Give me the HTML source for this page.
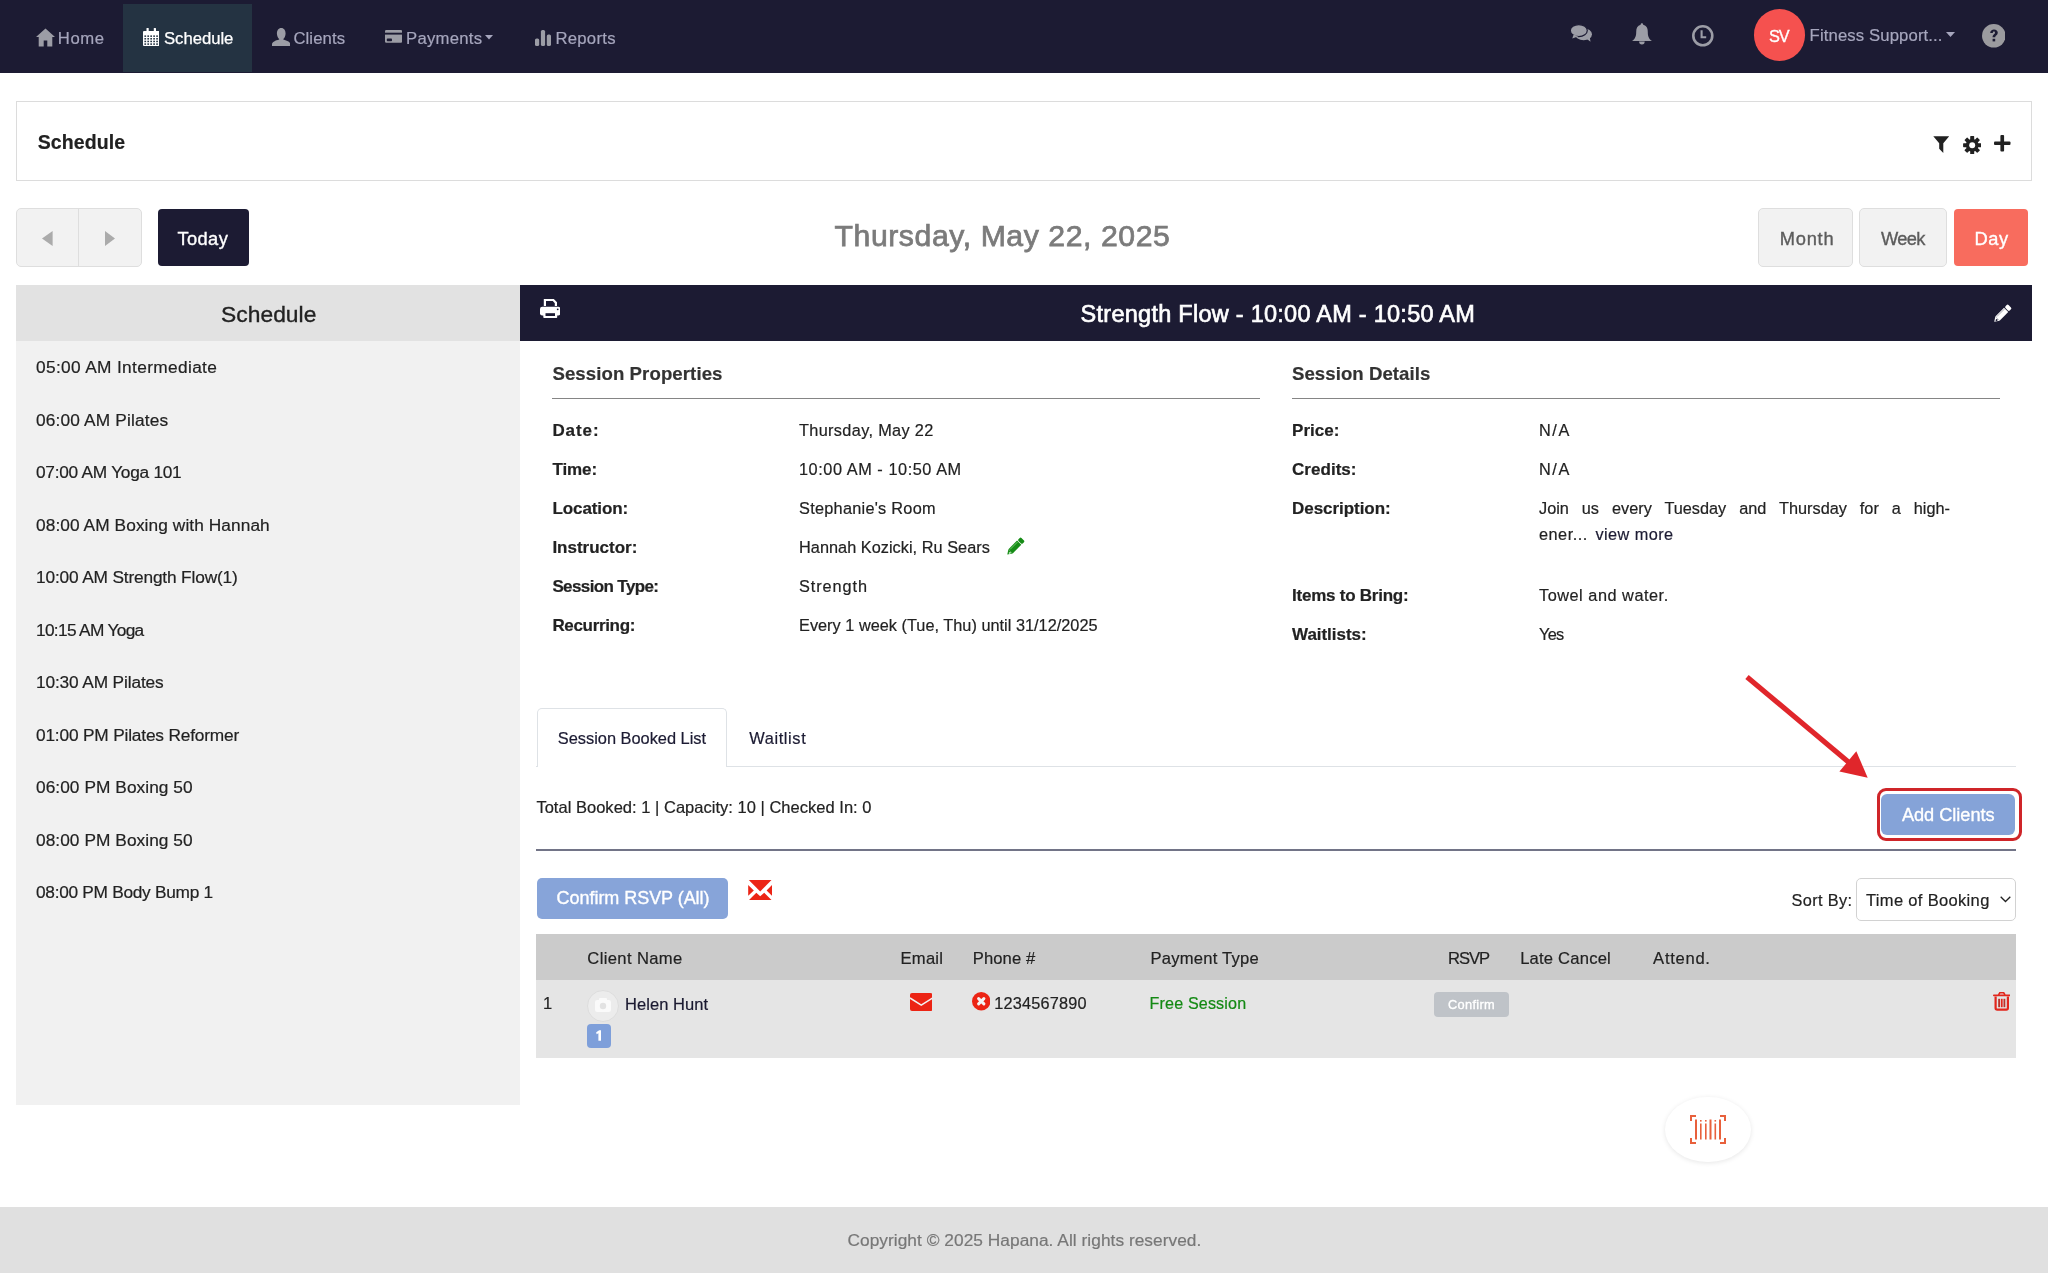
<!DOCTYPE html>
<html><head><meta charset="utf-8"><title>Schedule</title>
<style>
html,body{margin:0;padding:0;background:#fff;width:2048px;height:1273px;overflow:hidden;position:relative;font-family:"Liberation Sans", sans-serif}
.t{position:absolute;line-height:1;white-space:nowrap;font-family:"Liberation Sans", sans-serif;-webkit-text-stroke:0.2px currentColor}
svg{display:block}
</style></head><body><div id="root" style="position:absolute;left:0;top:0;width:2048px;height:1273px;will-change:transform">
<div style="position:absolute;left:0px;top:0px;width:2048px;height:73px;background:#1c1b33"></div>
<div style="position:absolute;left:123px;top:4px;width:129px;height:68px;background:#243342"></div>
<svg style="position:absolute;left:36px;top:27.5px;" width="19" height="19" viewBox="0 0 19 19"><path d="M9.5 0.5 L19 9 L16.3 9 L16.3 18.5 L11.3 18.5 L11.3 12.5 L7.7 12.5 L7.7 18.5 L2.7 18.5 L2.7 9 L0 9 Z" fill="#9c9da6"/></svg>
<div class="t" style="left:57.8px;top:30.61px;font-size:16.7px;font-weight:400;color:#a6a6bd;letter-spacing:0.567px;">Home</div>
<svg style="position:absolute;left:142.5px;top:28px;" width="16.5" height="18" viewBox="0 0 16.5 18"><rect x="0" y="3" width="16.5" height="15" rx="1" fill="#fff"/><rect x="3.5" y="0" width="2.2" height="4.5" rx="0.5" fill="#fff"/><rect x="10.8" y="0" width="2.2" height="4.5" rx="0.5" fill="#fff"/><rect x="1.40" y="7.40" width="1.7" height="1.5" fill="#243342"/><rect x="4.35" y="7.40" width="1.7" height="1.5" fill="#243342"/><rect x="7.30" y="7.40" width="1.7" height="1.5" fill="#243342"/><rect x="10.25" y="7.40" width="1.7" height="1.5" fill="#243342"/><rect x="13.20" y="7.40" width="1.7" height="1.5" fill="#243342"/><rect x="1.40" y="10.05" width="1.7" height="1.5" fill="#243342"/><rect x="4.35" y="10.05" width="1.7" height="1.5" fill="#243342"/><rect x="7.30" y="10.05" width="1.7" height="1.5" fill="#243342"/><rect x="10.25" y="10.05" width="1.7" height="1.5" fill="#243342"/><rect x="13.20" y="10.05" width="1.7" height="1.5" fill="#243342"/><rect x="1.40" y="12.70" width="1.7" height="1.5" fill="#243342"/><rect x="4.35" y="12.70" width="1.7" height="1.5" fill="#243342"/><rect x="7.30" y="12.70" width="1.7" height="1.5" fill="#243342"/><rect x="10.25" y="12.70" width="1.7" height="1.5" fill="#243342"/><rect x="13.20" y="12.70" width="1.7" height="1.5" fill="#243342"/><rect x="1.40" y="15.35" width="1.7" height="1.5" fill="#243342"/><rect x="4.35" y="15.35" width="1.7" height="1.5" fill="#243342"/><rect x="7.30" y="15.35" width="1.7" height="1.5" fill="#243342"/><rect x="10.25" y="15.35" width="1.7" height="1.5" fill="#243342"/><rect x="13.20" y="15.35" width="1.7" height="1.5" fill="#243342"/></svg>
<div class="t" style="left:164px;top:31.11px;font-size:16.7px;font-weight:400;color:#ffffff;letter-spacing:-0.029px;-webkit-text-stroke:0.25px currentColor;">Schedule</div>
<svg style="position:absolute;left:271.5px;top:28px;" width="18.5" height="18" viewBox="0 0 18.5 18"><path d="M9.25 0 C12 0 13.6 2.4 13.6 5.6 C13.6 8.2 12.3 10.3 11.3 11 L11.3 11.6 C15 12.6 18.5 14 18.5 16.5 L18.5 18 L0 18 L0 16.5 C0 14 3.5 12.6 7.2 11.6 L7.2 11 C6.2 10.3 4.9 8.2 4.9 5.6 C4.9 2.4 6.5 0 9.25 0 Z" fill="#9c9da6"/></svg>
<div class="t" style="left:293.4px;top:30.71px;font-size:16.7px;font-weight:400;color:#a6a6bd;letter-spacing:0.100px;">Clients</div>
<svg style="position:absolute;left:384.7px;top:30.3px;" width="17.2" height="12.8" viewBox="0 0 17.2 12.8"><rect x="0" y="0" width="17.2" height="12.8" rx="1.2" fill="#9c9da6"/><rect x="0" y="2.7" width="17.2" height="1.9" fill="#1c1b33"/><rect x="1.8" y="8.6" width="5.2" height="2.6" rx="0.8" fill="#1c1b33"/></svg>
<div class="t" style="left:406px;top:30.71px;font-size:16.7px;font-weight:400;color:#a6a6bd;letter-spacing:0.257px;">Payments</div>
<svg style="position:absolute;left:485px;top:34.8px;" width="8" height="5" viewBox="0 0 8 5"><path d="M0 0 L8 0 L4 4.6 Z" fill="#a6a6bd"/></svg>
<svg style="position:absolute;left:535px;top:29.7px;" width="16" height="16" viewBox="0 0 16 16"><rect x="0" y="8.5" width="4.2" height="7.5" rx="1.6" fill="#9c9da6"/><rect x="5.9" y="0" width="4.2" height="16" rx="1.6" fill="#9c9da6"/><rect x="11.8" y="4.5" width="4.2" height="11.5" rx="1.6" fill="#9c9da6"/></svg>
<div class="t" style="left:555.4px;top:30.71px;font-size:16.7px;font-weight:400;color:#a6a6bd;letter-spacing:0.283px;">Reports</div>
<svg style="position:absolute;left:1569.5px;top:24.3px;" width="23" height="18.5" viewBox="0 0 23 18.5"><ellipse cx="13.6" cy="10.3" rx="8.4" ry="6" fill="#9c9da6"/><path d="M15.5 14 L20.5 17.8 L19.8 13 Z" fill="#9c9da6"/><ellipse cx="8.8" cy="6.6" rx="8.5" ry="6" fill="#9c9da6" stroke="#1c1b33" stroke-width="1.2"/><path d="M3.6 10.5 L2.3 14.6 L8.5 12.2 Z" fill="#9c9da6"/></svg>
<svg style="position:absolute;left:1632px;top:23.3px;" width="20" height="22" viewBox="0 0 20 22"><path d="M9.9 0.2 C10.8 0.2 11.2 0.9 11.2 1.8 C14.6 2.6 15.8 5.2 15.8 9 C15.8 13 16.6 15.6 20 18.1 L0 18.1 C3.4 15.6 4.2 13 4.2 9 C4.2 5.2 5.4 2.6 8.6 1.8 C8.6 0.9 9 0.2 9.9 0.2 Z" fill="#9c9da6"/><path d="M7.1 18.5 L12.7 18.5 A2.8 3 0 0 1 7.1 18.5 Z" fill="#9c9da6"/></svg>
<svg style="position:absolute;left:1692px;top:25px;" width="21.6" height="21.6" viewBox="0 0 21.6 21.6"><circle cx="10.8" cy="10.8" r="9.5" fill="none" stroke="#9c9da6" stroke-width="2.6"/><path d="M9.6 5.2 L9.6 12.2 L14.2 12.2" fill="none" stroke="#9c9da6" stroke-width="2.1"/></svg>
<div style="position:absolute;left:1753.7px;top:9px;width:51.59999999999991px;height:51.6px;background:#f5514f;border-radius:50%"></div>
<div class="t" style="left:1769px;top:28.33px;font-size:16.3px;font-weight:400;color:#ffffff;letter-spacing:-1.000px;-webkit-text-stroke:0.35px currentColor;">SV</div>
<div class="t" style="left:1809.6px;top:28.01px;font-size:16.7px;font-weight:400;color:#a6a6bd;letter-spacing:0.124px;">Fitness Support...</div>
<svg style="position:absolute;left:1945.8px;top:32px;" width="9" height="5.5" viewBox="0 0 9 5.5"><path d="M0 0 L9 0 L4.5 5 Z" fill="#a6a6bd"/></svg>
<svg style="position:absolute;left:1981.5px;top:24px;" width="23.6" height="23.6" viewBox="0 0 23.6 23.6"><circle cx="11.8" cy="11.8" r="11.8" fill="#9b9b9f"/><path d="M8.2 9 C8.2 6.6 10 5.4 12 5.4 C14.3 5.4 15.8 6.8 15.8 8.7 C15.8 10.9 13.2 11.4 13.2 13.2 L10.6 13.2 C10.6 10.4 13 10.2 13 8.8 C13 8.1 12.6 7.6 11.9 7.6 C11.1 7.6 10.8 8.3 10.8 9 Z" fill="#1c1b33"/><rect x="10.6" y="14.8" width="2.6" height="2.6" fill="#1c1b33"/></svg>
<div style="position:absolute;left:16px;top:100.5px;width:2016px;height:80.5px;box-sizing:border-box;border:1.5px solid #dcdcdc;background:#fff"></div>
<div class="t" style="left:37.7px;top:132.51px;font-size:19.5px;font-weight:700;color:#212121;letter-spacing:0.086px;">Schedule</div>
<svg style="position:absolute;left:1932.5px;top:135.8px;" width="16.5" height="17" viewBox="0 0 16.5 17"><path d="M0.3 0.3 L16.2 0.3 L10.3 7.2 L10.3 17 L6.2 12.8 L6.2 7.2 Z" fill="#212121"/></svg>
<svg style="position:absolute;left:1962.6px;top:136px;" width="18.4" height="18.4" viewBox="0 0 18.4 18.4"><g transform="translate(9.2,9.2)"><rect x="-2" y="-9.1" width="4" height="4.2" rx="0.6" transform="rotate(0)" fill="#212121"/><rect x="-2" y="-9.1" width="4" height="4.2" rx="0.6" transform="rotate(45)" fill="#212121"/><rect x="-2" y="-9.1" width="4" height="4.2" rx="0.6" transform="rotate(90)" fill="#212121"/><rect x="-2" y="-9.1" width="4" height="4.2" rx="0.6" transform="rotate(135)" fill="#212121"/><rect x="-2" y="-9.1" width="4" height="4.2" rx="0.6" transform="rotate(180)" fill="#212121"/><rect x="-2" y="-9.1" width="4" height="4.2" rx="0.6" transform="rotate(225)" fill="#212121"/><rect x="-2" y="-9.1" width="4" height="4.2" rx="0.6" transform="rotate(270)" fill="#212121"/><rect x="-2" y="-9.1" width="4" height="4.2" rx="0.6" transform="rotate(315)" fill="#212121"/><circle r="6.3" fill="#212121"/><circle r="3" fill="#fff"/></g></svg>
<svg style="position:absolute;left:1994px;top:135px;" width="16.5" height="16.5" viewBox="0 0 16.5 16.5"><rect x="6.4" y="0" width="3.7" height="16.5" rx="1" fill="#212121"/><rect x="0" y="6.4" width="16.5" height="3.7" rx="1" fill="#212121"/></svg>
<div style="position:absolute;left:16px;top:208px;width:126px;height:59px;box-sizing:border-box;border:1px solid #dedede;background:#f2f2f2;border-radius:5px"></div>
<div style="position:absolute;left:78px;top:208.5px;width:1px;height:58.0px;background:#dedede"></div>
<svg style="position:absolute;left:42.4px;top:230.5px;" width="10.6" height="15" viewBox="0 0 10.6 15"><path d="M10.6 0 L10.6 15 L0 7.5 Z" fill="#ababab"/></svg>
<svg style="position:absolute;left:105.2px;top:230.5px;" width="10" height="15" viewBox="0 0 10 15"><path d="M0 0 L0 15 L10 7.5 Z" fill="#ababab"/></svg>
<div style="position:absolute;left:157.5px;top:209px;width:91.0px;height:57px;background:#1c1b33;border-radius:4px"></div>
<div class="t" style="left:177.5px;top:229.99px;font-size:18.3px;font-weight:400;color:#ffffff;letter-spacing:0.375px;-webkit-text-stroke:0.35px currentColor;">Today</div>
<div class="t" style="left:834.5px;top:220.64px;font-size:30.2px;font-weight:400;color:#7b7b7b;letter-spacing:0.576px;-webkit-text-stroke:0.75px currentColor;">Thursday, May 22, 2025</div>
<div style="position:absolute;left:1758px;top:208px;width:95px;height:59px;box-sizing:border-box;border:1px solid #dedede;background:#f2f2f2;border-radius:5px"></div>
<div class="t" style="left:1779.7px;top:229.99px;font-size:18.3px;font-weight:400;color:#5c5c5c;letter-spacing:0.775px;-webkit-text-stroke:0.35px currentColor;">Month</div>
<div style="position:absolute;left:1859px;top:208px;width:88px;height:59px;box-sizing:border-box;border:1px solid #dedede;background:#f2f2f2;border-radius:5px"></div>
<div class="t" style="left:1881px;top:229.99px;font-size:18.3px;font-weight:400;color:#5c5c5c;letter-spacing:-0.667px;-webkit-text-stroke:0.35px currentColor;">Week</div>
<div style="position:absolute;left:1954px;top:209px;width:74px;height:57px;background:#f86c5e;border-radius:4px"></div>
<div class="t" style="left:1974.4px;top:229.99px;font-size:18.3px;font-weight:400;color:#ffffff;letter-spacing:0.650px;-webkit-text-stroke:0.35px currentColor;">Day</div>
<div style="position:absolute;left:16px;top:285px;width:504px;height:820px;background:#f1f1f1"></div>
<div style="position:absolute;left:16px;top:285px;width:504px;height:56px;background:#e2e2e2"></div>
<div class="t" style="left:221px;top:302.50px;font-size:22.8px;font-weight:400;color:#222;letter-spacing:0.043px;-webkit-text-stroke:0.35px currentColor;">Schedule</div>
<div class="t" style="left:36px;top:359.21px;font-size:17.3px;font-weight:400;color:#222;letter-spacing:0.350px;">05:00 AM Intermediate</div>
<div class="t" style="left:36px;top:411.70px;font-size:17.3px;font-weight:400;color:#222;letter-spacing:0.167px;">06:00 AM Pilates</div>
<div class="t" style="left:36px;top:464.19px;font-size:17.3px;font-weight:400;color:#222;letter-spacing:-0.262px;">07:00 AM Yoga 101</div>
<div class="t" style="left:36px;top:516.68px;font-size:17.3px;font-weight:400;color:#222;letter-spacing:0.085px;">08:00 AM Boxing with Hannah</div>
<div class="t" style="left:36px;top:569.17px;font-size:17.3px;font-weight:400;color:#222;letter-spacing:-0.158px;">10:00 AM Strength Flow(1)</div>
<div class="t" style="left:36px;top:621.66px;font-size:17.3px;font-weight:400;color:#222;letter-spacing:-0.675px;">10:15 AM Yoga</div>
<div class="t" style="left:36px;top:674.15px;font-size:17.3px;font-weight:400;color:#222;letter-spacing:-0.133px;">10:30 AM Pilates</div>
<div class="t" style="left:36px;top:726.64px;font-size:17.3px;font-weight:400;color:#222;letter-spacing:-0.179px;">01:00 PM Pilates Reformer</div>
<div class="t" style="left:36px;top:779.13px;font-size:17.3px;font-weight:400;color:#222;letter-spacing:0.059px;">06:00 PM Boxing 50</div>
<div class="t" style="left:36px;top:831.62px;font-size:17.3px;font-weight:400;color:#222;letter-spacing:0.059px;">08:00 PM Boxing 50</div>
<div class="t" style="left:36px;top:884.11px;font-size:17.3px;font-weight:400;color:#222;letter-spacing:-0.284px;">08:00 PM Body Bump 1</div>
<div style="position:absolute;left:520px;top:285px;width:1512px;height:56px;background:#1c1b33"></div>
<svg style="position:absolute;left:539.5px;top:299px;" width="20.5" height="19" viewBox="0 0 20.5 19"><path d="M3.8 0 L13.8 0 L17 3.3 L17 7 L14.8 7 L14.8 4.2 L12.8 2.1 L6 2.1 L6 7 L3.8 7 Z" fill="#fff"/><rect x="0" y="7.8" width="20.5" height="8.6" rx="2.2" fill="#fff"/><rect x="3.3" y="12" width="13.9" height="7" rx="0.8" fill="#fff"/><rect x="5.5" y="14.2" width="9.5" height="2.8" fill="#1c1b33"/><circle cx="17.7" cy="10.3" r="0.9" fill="#1c1b33"/></svg>
<div class="t" style="left:1080.6px;top:302.93px;font-size:23.5px;font-weight:400;color:#ffffff;letter-spacing:0.262px;-webkit-text-stroke:0.65px currentColor;">Strength Flow - 10:00 AM - 10:50 AM</div>
<svg style="position:absolute;left:1993px;top:304.3px;" width="19.5" height="19.2" viewBox="0 0 19.5 19.2"><g transform="translate(1.2,17.8) rotate(-45)"><path d="M0 0 L4.6 -3 L4.6 3 Z" fill="#fff"/><rect x="4.6" y="-3" width="12.3" height="6" fill="#fff"/><rect x="17.7" y="-3" width="4.3" height="6" rx="1.3" fill="#fff"/><path d="M5.6 -1.8 L16.2 -1.8" stroke="#1c1b33" stroke-width="0.5" opacity="0.7"/><rect x="1.9" y="-0.3" width="2" height="1.6" fill="#1c1b33"/></g></svg>
<div class="t" style="left:552.4px;top:364.65px;font-size:18.6px;font-weight:700;color:#333;letter-spacing:0.094px;">Session Properties</div>
<div style="position:absolute;left:552px;top:398px;width:708px;height:1px;background:#858585"></div>
<div class="t" style="left:1292px;top:364.65px;font-size:18.6px;font-weight:700;color:#333;letter-spacing:0.057px;">Session Details</div>
<div style="position:absolute;left:1292px;top:398px;width:708px;height:1px;background:#858585"></div>
<div class="t" style="left:552.4px;top:421.96px;font-size:17px;font-weight:700;color:#222;letter-spacing:0.925px;">Date:</div>
<div class="t" style="left:799px;top:422.03px;font-size:16.3px;font-weight:400;color:#222;letter-spacing:0.347px;">Thursday, May 22</div>
<div class="t" style="left:552.4px;top:460.96px;font-size:17px;font-weight:700;color:#222;letter-spacing:-0.075px;">Time:</div>
<div class="t" style="left:799px;top:461.03px;font-size:16.3px;font-weight:400;color:#222;letter-spacing:0.561px;">10:00 AM - 10:50 AM</div>
<div class="t" style="left:552.4px;top:499.96px;font-size:17px;font-weight:700;color:#222;letter-spacing:-0.075px;">Location:</div>
<div class="t" style="left:799px;top:500.03px;font-size:16.3px;font-weight:400;color:#222;letter-spacing:0.267px;">Stephanie's Room</div>
<div class="t" style="left:552.4px;top:538.96px;font-size:17px;font-weight:700;color:#222;letter-spacing:-0.010px;">Instructor:</div>
<div class="t" style="left:799px;top:539.03px;font-size:16.3px;font-weight:400;color:#222;letter-spacing:0.035px;">Hannah Kozicki, Ru Sears</div>
<div class="t" style="left:552.4px;top:577.96px;font-size:17px;font-weight:700;color:#222;letter-spacing:-0.617px;">Session Type:</div>
<div class="t" style="left:799px;top:578.03px;font-size:16.3px;font-weight:400;color:#222;letter-spacing:0.914px;">Strength</div>
<div class="t" style="left:552.4px;top:616.96px;font-size:17px;font-weight:700;color:#222;letter-spacing:-0.333px;">Recurring:</div>
<div class="t" style="left:799px;top:617.03px;font-size:16.3px;font-weight:400;color:#222;letter-spacing:0.021px;">Every 1 week (Tue, Thu) until 31/12/2025</div>
<svg style="position:absolute;left:1005.5px;top:536.5px;" width="19.5" height="19" viewBox="0 0 19.5 19"><g transform="translate(1.3,17.6) rotate(-45)"><path d="M0 0 L4.6 -3 L4.6 3 Z" fill="#168c16"/><rect x="4.6" y="-3" width="12.2" height="6" fill="#168c16"/><rect x="17.6" y="-3" width="4.2" height="6" rx="1.2" fill="#168c16"/><path d="M5.6 -1.7 L16 -1.7" stroke="#86dd86" stroke-width="0.7"/><rect x="2" y="-0.2" width="2" height="1.6" fill="#c8f0c8"/></g></svg>
<div class="t" style="left:1292px;top:422.06px;font-size:17px;font-weight:700;color:#222;letter-spacing:0.040px;">Price:</div>
<div class="t" style="left:1539px;top:422.13px;font-size:16.3px;font-weight:400;color:#222;letter-spacing:1.550px;">N/A</div>
<div class="t" style="left:1292px;top:461.06px;font-size:17px;font-weight:700;color:#222;letter-spacing:0.043px;">Credits:</div>
<div class="t" style="left:1539px;top:461.13px;font-size:16.3px;font-weight:400;color:#222;letter-spacing:1.550px;">N/A</div>
<div class="t" style="left:1292px;top:500.46px;font-size:17px;font-weight:700;color:#222;letter-spacing:-0.045px;">Description:</div>
<div class="t" style="left:1292px;top:586.86px;font-size:17px;font-weight:700;color:#222;letter-spacing:-0.236px;">Items to Bring:</div>
<div class="t" style="left:1539px;top:586.93px;font-size:16.3px;font-weight:400;color:#222;letter-spacing:0.527px;">Towel and water.</div>
<div class="t" style="left:1292px;top:625.86px;font-size:17px;font-weight:700;color:#222;letter-spacing:-0.033px;">Waitlists:</div>
<div class="t" style="left:1539px;top:625.93px;font-size:16.3px;font-weight:400;color:#222;letter-spacing:-0.700px;">Yes</div>
<div class="t" style="left:1539px;top:500.03px;width:411px;font-size:16.3px;text-align:justify;text-align-last:justify;color:#222">Join us every Tuesday and Thursday for a high-</div>
<div class="t" style="left:1539px;top:526.43px;font-size:16.3px;font-weight:400;color:#222;letter-spacing:0.500px;">ener...</div>
<div class="t" style="left:1595.5px;top:526.43px;font-size:16.3px;font-weight:400;color:#1c1b33;letter-spacing:0.425px;">view more</div>
<div style="position:absolute;left:536px;top:766px;width:1480px;height:1px;background:#dee2e6"></div>
<div style="position:absolute;left:536.5px;top:708px;width:190.5px;height:59px;box-sizing:border-box;border:1px solid #dee2e6;border-bottom:none;border-radius:5px 5px 0 0;background:#fff"></div>
<div class="t" style="left:557.8px;top:729.95px;font-size:16.4px;font-weight:400;color:#1c1b33;letter-spacing:-0.017px;">Session Booked List</div>
<div class="t" style="left:749.2px;top:729.95px;font-size:16.4px;font-weight:400;color:#1c1b33;letter-spacing:0.614px;">Waitlist</div>
<div class="t" style="left:536.4px;top:798.87px;font-size:16.5px;font-weight:400;color:#222;letter-spacing:0.020px;">Total Booked: 1 | Capacity: 10 | Checked In: 0</div>
<svg style="position:absolute;left:1735px;top:665px;" width="140" height="120" viewBox="0 0 140 120"><line x1="12" y1="12" x2="117" y2="100" stroke="#e0262b" stroke-width="5.2"/><path d="M132.7 112.7 L104.4 106.5 L121.3 86.3 Z" fill="#e0262b"/></svg>
<div style="position:absolute;left:1877px;top:788px;width:144.5px;height:52.5px;box-sizing:border-box;border:3.4px solid #cf2529;border-radius:9px"></div>
<div style="position:absolute;left:1881px;top:794px;width:134px;height:41px;background:#85a3d8;border-radius:6px"></div>
<div class="t" style="left:1901.9px;top:806.28px;font-size:18.2px;font-weight:400;color:#ffffff;letter-spacing:-0.030px;-webkit-text-stroke:0.35px currentColor;">Add Clients</div>
<div style="position:absolute;left:536px;top:849px;width:1480px;height:2px;background:#727487"></div>
<div style="position:absolute;left:536.5px;top:878px;width:191.5px;height:40.60000000000002px;background:#87a4d9;border-radius:5px"></div>
<div class="t" style="left:556.6px;top:889.14px;font-size:18px;font-weight:400;color:#ffffff;letter-spacing:-0.047px;-webkit-text-stroke:0.35px currentColor;">Confirm RSVP (All)</div>
<svg style="position:absolute;left:748px;top:880px;" width="24" height="20" viewBox="0 0 24 20"><g fill="#ec2415"><path d="M0.8 0 L23.5 0 L12.2 11.6 Z"/><path d="M0.2 5 L0.2 15.8 L5.8 10.4 Z"/><path d="M24 5 L24 15.8 L18.6 10.4 Z"/><path d="M1 20 L23.5 20 L16.2 12.8 L12.2 16.2 L8.3 12.8 Z"/></g></svg>
<div class="t" style="left:1791.6px;top:891.93px;font-size:16.3px;font-weight:400;color:#222;letter-spacing:0.371px;">Sort By:</div>
<div style="position:absolute;left:1855.5px;top:878px;width:160.5px;height:42.5px;box-sizing:border-box;border:1px solid #d2d2d2;border-radius:5px;background:#fff"></div>
<div class="t" style="left:1866px;top:891.77px;font-size:16.5px;font-weight:400;color:#222;letter-spacing:0.336px;">Time of Booking</div>
<svg style="position:absolute;left:1999.5px;top:895.5px;" width="11" height="7" viewBox="0 0 11 7"><path d="M0.7 0.7 L5.5 5.5 L10.3 0.7" fill="none" stroke="#222" stroke-width="1.3"/></svg>
<div style="position:absolute;left:536px;top:934px;width:1480px;height:46px;background:#cbcbcb"></div>
<div style="position:absolute;left:536px;top:980px;width:1480px;height:77.5px;background:#e5e5e5"></div>
<div class="t" style="left:587.3px;top:951.49px;font-size:16.6px;font-weight:400;color:#222;letter-spacing:0.370px;">Client Name</div>
<div class="t" style="left:900.5px;top:951.49px;font-size:16.6px;font-weight:400;color:#222;letter-spacing:0.250px;">Email</div>
<div class="t" style="left:972.8px;top:951.49px;font-size:16.6px;font-weight:400;color:#222;letter-spacing:0.083px;">Phone #</div>
<div class="t" style="left:1150.5px;top:951.49px;font-size:16.6px;font-weight:400;color:#222;letter-spacing:0.227px;">Payment Type</div>
<div class="t" style="left:1448px;top:951.49px;font-size:16.6px;font-weight:400;color:#222;letter-spacing:-1.033px;">RSVP</div>
<div class="t" style="left:1520.2px;top:951.49px;font-size:16.6px;font-weight:400;color:#222;letter-spacing:0.200px;">Late Cancel</div>
<div class="t" style="left:1653.1px;top:951.49px;font-size:16.6px;font-weight:400;color:#222;letter-spacing:0.717px;">Attend.</div>
<div class="t" style="left:543px;top:995.17px;font-size:16.5px;font-weight:400;color:#222;">1</div>
<div style="position:absolute;left:587px;top:989.5px;width:32px;height:32.0px;background:#ececec;border-radius:50%;box-sizing:border-box;border:1px solid #dcdcdc"></div>
<svg style="position:absolute;left:594px;top:997px;" width="18" height="16" viewBox="0 0 18 16"><rect x="1" y="3" width="16" height="12" rx="2" fill="#fafafa"/><rect x="5" y="1" width="8" height="3" rx="1" fill="#fafafa"/><circle cx="9" cy="9" r="3.2" fill="#e2e2e2"/></svg>
<div class="t" style="left:625px;top:996.27px;font-size:16.5px;font-weight:400;color:#1a1930;letter-spacing:0.056px;">Helen Hunt</div>
<div style="position:absolute;left:587.3px;top:1024.4px;width:23.700000000000045px;height:23.59999999999991px;background:#7e9fda;border-radius:4px"></div>
<svg style="position:absolute;left:587.3px;top:1024.4px;" width="24" height="24" viewBox="0 0 24 24"><path d="M9.2 8.2 L12.2 6.3 L14 6.3 L14 16.8 L11.4 16.8 L11.4 9.3 L9.6 10.2 Z" fill="#fff"/></svg>
<svg style="position:absolute;left:909.5px;top:992.5px;" width="22.5" height="18" viewBox="0 0 22.5 18"><rect x="0" y="0" width="22.5" height="18" rx="2" fill="#ec2414"/><path d="M0 5 L11.25 12.2 L22.5 5" fill="none" stroke="#f2f2f2" stroke-width="1.5"/></svg>
<svg style="position:absolute;left:971.5px;top:992px;" width="18.5" height="18.5" viewBox="0 0 18.5 18.5"><circle cx="9.25" cy="9.25" r="9.25" fill="#ec2414"/><path d="M6.6 6.6 L11.9 11.9 M11.9 6.6 L6.6 11.9" stroke="#f4f4f4" stroke-width="3" stroke-linecap="round"/></svg>
<div class="t" style="left:994.3px;top:994.83px;font-size:16.3px;font-weight:400;color:#222;letter-spacing:0.189px;">1234567890</div>
<div class="t" style="left:1149.5px;top:995.00px;font-size:16.1px;font-weight:400;color:#138913;letter-spacing:0.164px;">Free Session</div>
<div style="position:absolute;left:1433.5px;top:992px;width:75.0px;height:25px;background:#bfc3c8;border-radius:4px"></div>
<div class="t" style="left:1448px;top:998.70px;font-size:12.8px;font-weight:400;color:#ffffff;letter-spacing:0.317px;-webkit-text-stroke:0.35px currentColor;">Confirm</div>
<svg style="position:absolute;left:1992.5px;top:992px;" width="17.5" height="18.5" viewBox="0 0 17.5 18.5"><path d="M5.5 3 L6.8 0.8 L10.7 0.8 L12 3" fill="none" stroke="#e2261c" stroke-width="1.6"/><rect x="0" y="2.4" width="17.5" height="1.8" rx="0.8" fill="#e2261c"/><path d="M2.6 4.5 L2.6 16 Q2.6 17.6 4.2 17.6 L13.3 17.6 Q14.9 17.6 14.9 16 L14.9 4.5" fill="none" stroke="#e2261c" stroke-width="2.2"/><rect x="5.2" y="6.8" width="1.8" height="8.4" fill="#b9322a"/><rect x="7.85" y="6.8" width="1.8" height="8.4" fill="#e2261c"/><rect x="10.5" y="6.8" width="1.8" height="8.4" fill="#b9322a"/></svg>
<div style="position:absolute;left:1665px;top:1097px;width:86px;height:65px;background:#fff;border-radius:43px / 33px;box-shadow:0 1px 5px rgba(0,0,0,0.10)"></div>
<svg style="position:absolute;left:1690px;top:1115px;" width="36" height="29" viewBox="0 0 36 29"><g fill="#e8603c"><path d="M0 0 H6 V2 H2 V6 H0 Z"/><path d="M36 0 H30 V2 H34 V6 H36 Z"/><path d="M0 29 H6 V27 H2 V23 H0 Z"/><path d="M36 29 H30 V27 H34 V23 H36 Z"/><rect x="5" y="4.5" width="2" height="20"/><rect x="10" y="8.5" width="1.6" height="16"/><rect x="10" y="5" width="1.6" height="1.6"/><rect x="15" y="8.5" width="1.6" height="16"/><rect x="15" y="5" width="1.6" height="1.6"/><rect x="19.5" y="4.5" width="2" height="20"/><rect x="24.5" y="8.5" width="1.6" height="16"/><rect x="24.5" y="5" width="1.6" height="1.6"/><rect x="29" y="4.5" width="2" height="20"/></g></svg>
<div style="position:absolute;left:0px;top:1207px;width:2048px;height:66px;background:#e0e0e0"></div>
<div class="t" style="left:847.5px;top:1231.61px;font-size:17.3px;font-weight:400;color:#777777;letter-spacing:0.045px;">Copyright &copy; 2025 Hapana. All rights reserved.</div>
</div></body></html>
